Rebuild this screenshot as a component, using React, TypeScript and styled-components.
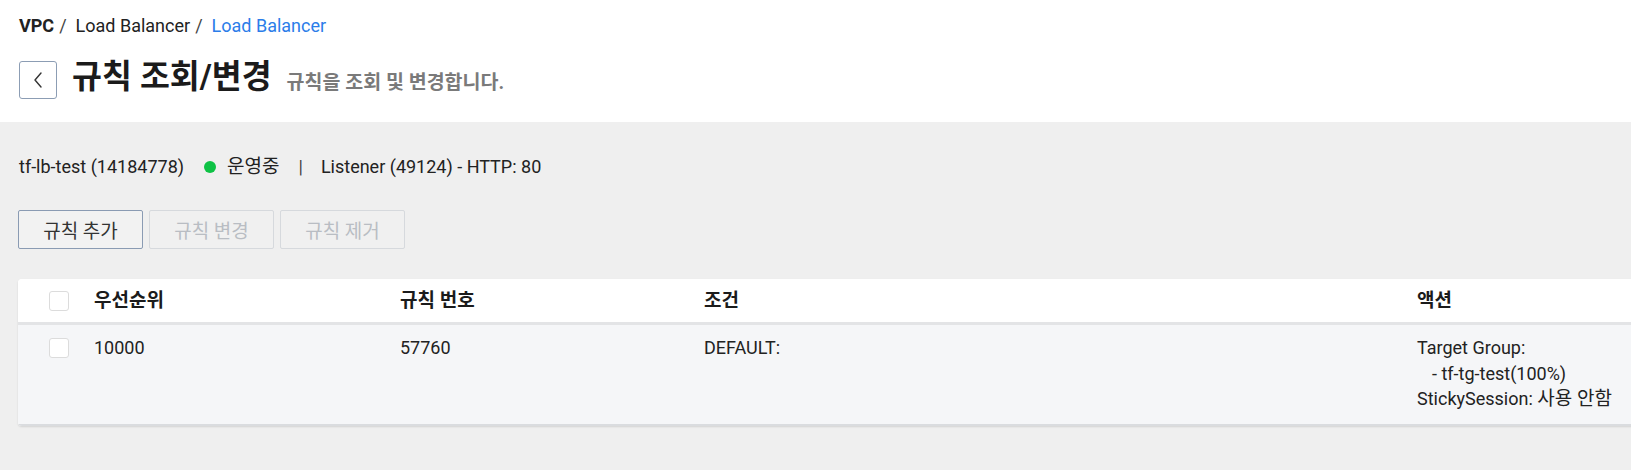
import styled, { createGlobalStyle } from "styled-components";

const GlobalStyle = createGlobalStyle`
    html, body {
        margin: 0;
        padding: 0;
        background-color: #ffffff;
        overflow: hidden;
    }

    body {
        font-family: Roboto, "Noto Sans CJK KR", sans-serif;
        color: #222222;
    }
`;

const Page = styled.div`
    width: 100%;
    min-height: 470px;
    display: flex;
    flex-direction: column;
`;

const TopSection = styled.section`
    height: 122px;
    box-sizing: border-box;
    padding: 13px 19px 0;
    background-color: #ffffff;
`;

const Breadcrumb = styled.nav`
    display: flex;
    align-items: center;
    font-size: 18px;
    line-height: 26px;
`;

const Crumb = styled.span<{ $bold?: boolean; $active?: boolean }>`
    font-weight: ${(p) => (p.$bold ? 700 : 400)};
    color: ${(p) => (p.$active ? "#2b7de9" : "#222222")};
`;

const Slash = styled.span`
    margin: 0 9px 0 5px;
    color: #444444;
`;

const TitleRow = styled.div`
    margin-top: 22px;
    display: flex;
    align-items: center;
`;

const BackBtn = styled.button`
    width: 38px;
    height: 38px;
    padding: 0;
    border: 1px solid #8c9db4;
    border-radius: 3px;
    background-color: #ffffff;
    display: flex;
    align-items: center;
    justify-content: center;
    cursor: pointer;
`;

const Title = styled.h1`
    margin: 0 0 0 15px;
    font-size: 32.5px;
    font-weight: 700;
    line-height: 36px;
    color: #1b1b1b;
    position: relative;
    top: -3px;
`;

const SubTitle = styled.span`
    margin-left: 15px;
    font-size: 19.5px;
    font-weight: 700;
    color: #7a7a7a;
`;

const GraySection = styled.section`
    flex: 1;
    background-color: #efefef;
    padding: 33px 0 0 18px;
`;

const InfoLine = styled.div`
    display: flex;
    align-items: center;
    font-size: 18px;
    line-height: 24px;
    color: #222222;
    padding-left: 1px;
`;

const Ko = styled.span`
    font-size: 19px;
`;

const StatusDot = styled.span`
    width: 12px;
    height: 12px;
    border-radius: 50%;
    background-color: #0ec245;
    margin: 0 11px 0 20px;
`;

const Divider = styled.span`
    margin: 0 18px 0 19px;
    color: #444444;
`;

const ButtonRow = styled.div`
    margin-top: 31px;
    display: flex;
    gap: 6px;
`;

const ActionBtn = styled.button<{ $disabled?: boolean }>`
    width: 125px;
    height: 39px;
    box-sizing: border-box;
    border: 1px solid ${(p) => (p.$disabled ? "#d6d9dd" : "#8a9bb3")};
    border-radius: 2px;
    background-color: ${(p) => (p.$disabled ? "#f0f0f0" : "#f2f2f2")};
    color: ${(p) => (p.$disabled ? "#b9bdc3" : "#333333")};
    font-family: Roboto, "Noto Sans CJK KR", sans-serif;
    font-size: 19px;
    cursor: ${(p) => (p.$disabled ? "default" : "pointer")};
`;

const TableCard = styled.div`
    margin-top: 30px;
    width: 1700px;
    background-color: #ffffff;
    border-radius: 4px;
    box-shadow: 0 1px 2px rgba(0, 0, 0, 0.12);
    overflow: hidden;
`;

const Row = styled.div<{ $head?: boolean }>`
    display: grid;
    grid-template-columns: 76px 306px 304px 713px 1fr;
    align-items: ${(p) => (p.$head ? "center" : "start")};
    min-height: ${(p) => (p.$head ? "43px" : "auto")};
    padding: ${(p) => (p.$head ? "0" : "10px 0 12px")};
    background-color: ${(p) => (p.$head ? "#ffffff" : "#f5f6f8")};
    border-bottom: ${(p) => (p.$head ? "3px solid #e3e4e6" : "2px solid #dadcdf")};
    font-size: ${(p) => (p.$head ? "19px" : "18px")};
    line-height: ${(p) => (p.$head ? "25px" : "25.5px")};
    font-weight: ${(p) => (p.$head ? 700 : 400)};
    color: ${(p) => (p.$head ? "#1b1b1b" : "#222222")};
`;

const CheckCell = styled.div`
    padding-left: 31px;
    display: flex;
    align-items: center;
    height: 25px;
`;

const CheckBox = styled.span`
    width: 18px;
    height: 18px;
    border: 1px solid #dcdcdc;
    border-radius: 3px;
    background-color: #ffffff;
`;

const Cell = styled.div``;

const Indent = styled.div`
    padding-left: 15px;
`;

export default function App() {
    return (
        <>
            <GlobalStyle />
            <Page>
                <TopSection>
                    <Breadcrumb>
                        <Crumb $bold>VPC</Crumb>
                        <Slash>/</Slash>
                        <Crumb>Load Balancer</Crumb>
                        <Slash>/</Slash>
                        <Crumb $active>Load Balancer</Crumb>
                    </Breadcrumb>
                    <TitleRow>
                        <BackBtn aria-label="back">
                            <svg width="12" height="18" viewBox="0 0 12 18" fill="none">
                                <path d="M9 2 L3 9 L9 16" stroke="#333" strokeWidth="1.4" strokeLinejoin="round" strokeLinecap="round" />
                            </svg>
                        </BackBtn>
                        <Title>규칙 조회/변경</Title>
                        <SubTitle>규칙을 조회 및 변경합니다.</SubTitle>
                    </TitleRow>
                </TopSection>
                <GraySection>
                    <InfoLine>
                        <span>tf-lb-test (14184778)</span>
                        <StatusDot />
                        <Ko>운영중</Ko>
                        <Divider>|</Divider>
                        <span>Listener (49124) - HTTP: 80</span>
                    </InfoLine>
                    <ButtonRow>
                        <ActionBtn>규칙 추가</ActionBtn>
                        <ActionBtn $disabled disabled>규칙 변경</ActionBtn>
                        <ActionBtn $disabled disabled>규칙 제거</ActionBtn>
                    </ButtonRow>
                    <TableCard>
                        <Row $head>
                            <CheckCell><CheckBox /></CheckCell>
                            <Cell>우선순위</Cell>
                            <Cell>규칙 번호</Cell>
                            <Cell>조건</Cell>
                            <Cell>액션</Cell>
                        </Row>
                        <Row>
                            <CheckCell><CheckBox /></CheckCell>
                            <Cell>10000</Cell>
                            <Cell>57760</Cell>
                            <Cell>DEFAULT:</Cell>
                            <Cell>
                                <div>Target Group:</div>
                                <Indent>- tf-tg-test(100%)</Indent>
                                <div>StickySession: <Ko>사용 안함</Ko></div>
                            </Cell>
                        </Row>
                    </TableCard>
                </GraySection>
            </Page>
        </>
    );
}
